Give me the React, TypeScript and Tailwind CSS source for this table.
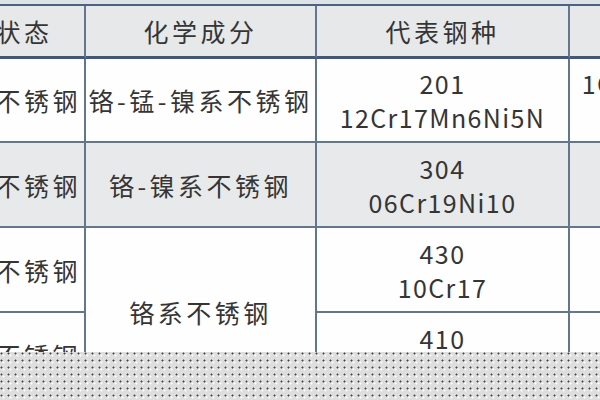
import React from "react";

const line = "border-[#63778c]";

function Cell({
  children,
  className = "",
}: {
  children?: React.ReactNode;
  className?: string;
}) {
  return (
    <div
      className={`flex flex-col items-center justify-center text-center whitespace-nowrap border-r-2 border-b-2 ${line} ${className}`}
    >
      {children}
    </div>
  );
}

function Num({ children }: { children: React.ReactNode }) {
  return <span className="tracking-[1.4px]">{children}</span>;
}

export default function App() {
  return (
    <div className="relative w-[600px] h-[400px] overflow-hidden bg-white font-['Noto_Sans_CJK_SC','Noto_Sans',sans-serif] text-[25px] leading-[34px] tracking-[3.5px] text-[#353535]">
      <div className="h-[4px] bg-[#dde2e8]" />
      <div className="ml-[-93px] w-[879px] border-t-2 border-[#4b6380] grid grid-cols-[179px_231px_253px_216px] grid-rows-[53px_84px_85px_85px_85px]">
        {/* header */}
        <Cell className="bg-[#e7e8ea] border-b-[3px] border-b-[#3d5a7c]">组织状态</Cell>
        <Cell className="bg-[#e7e8ea] border-b-[3px] border-b-[#3d5a7c]">化学成分</Cell>
        <Cell className="bg-[#e7e8ea] border-b-[3px] border-b-[#3d5a7c]">代表钢种</Cell>
        <Cell className="bg-[#e7e8ea] border-b-[3px] border-b-[#3d5a7c]">旧牌号</Cell>

        {/* row 1 */}
        <Cell className="bg-[#fefefe]">奥氏体不锈钢</Cell>
        <Cell className="bg-[#fefefe]">铬-锰-镍系不锈钢</Cell>
        <Cell className="bg-[#fefefe]">
          <Num>201</Num>
          <Num>12Cr17Mn6Ni5N</Num>
        </Cell>
        <Cell className="bg-[#fefefe]">
          <Num>1Cr17Mn6Ni5N</Num>
          <Num>SUS201</Num>
        </Cell>

        {/* row 2 */}
        <Cell className="bg-[#e8e9eb]">奥氏体不锈钢</Cell>
        <Cell className="bg-[#e8e9eb]">铬-镍系不锈钢</Cell>
        <Cell className="bg-[#e8e9eb]">
          <Num>304</Num>
          <Num>06Cr19Ni10</Num>
        </Cell>
        <Cell className="bg-[#e8e9eb]">
          <Num>0Cr18Ni9</Num>
          <Num>SUS304</Num>
        </Cell>

        {/* row 3 */}
        <Cell className="bg-[#fefefe]">铁素体不锈钢</Cell>
        <Cell className="bg-[#fefefe] row-span-2">铬系不锈钢</Cell>
        <Cell className="bg-[#fefefe]">
          <Num>430</Num>
          <Num>10Cr17</Num>
        </Cell>
        <Cell className="bg-[#fefefe]">
          <Num>1Cr17</Num>
          <Num>SUS430</Num>
        </Cell>

        {/* row 4 */}
        <Cell className="bg-[#fefefe]">马氏体不锈钢</Cell>
        <Cell className="bg-[#fefefe]">
          <Num>410</Num>
          <Num>12Cr13</Num>
        </Cell>
        <Cell className="bg-[#fefefe]">
          <Num>1Cr13</Num>
          <Num>SUS410</Num>
        </Cell>
      </div>

      {/* dotted overlay */}
      <div className="absolute left-0 right-0 top-[352px] bottom-0 bg-[#dedede] bg-[radial-gradient(circle_at_1.5px_1.5px,#444444_0.8px,transparent_1.2px),radial-gradient(circle_at_3.5px_3.5px,#ffffff_0.8px,transparent_1.2px)] bg-[length:7px_7px]" />
    </div>
  );
}
